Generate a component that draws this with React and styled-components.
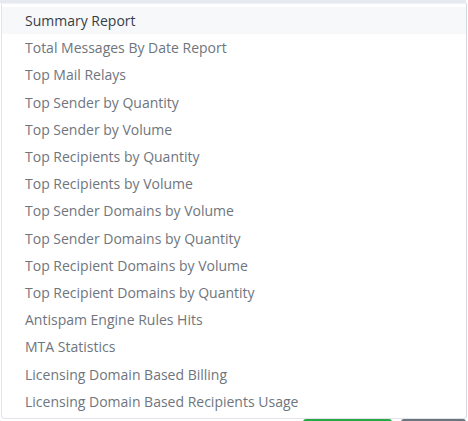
import React from "react";
import styled, { createGlobalStyle } from "styled-components";

const GlobalStyle = createGlobalStyle`
  html, body {
    margin: 0;
    padding: 0;
    background: #ffffff;
    height: 421px;
    overflow: hidden;
  }
  body {
    font-family: "Open Sans", "Liberation Sans", sans-serif;
  }
`;

const reports = [
  "Summary Report",
  "Total Messages By Date Report",
  "Top Mail Relays",
  "Top Sender by Quantity",
  "Top Sender by Volume",
  "Top Recipients by Quantity",
  "Top Recipients by Volume",
  "Top Sender Domains by Volume",
  "Top Sender Domains by Quantity",
  "Top Recipient Domains by Volume",
  "Top Recipient Domains by Quantity",
  "Antispam Engine Rules Hits",
  "MTA Statistics",
  "Licensing Domain Based Billing",
  "Licensing Domain Based Recipients Usage",
];

export default function App() {
  return (
    <>
      <GlobalStyle />
      <Page>
        <SelectEdge />
        <Menu>
          {reports.map((name, i) => (
            <Option key={name} active={i === 0}>
              {name}
            </Option>
          ))}
        </Menu>
        {/* form buttons sit under the open menu, only their top edge shows */}
        <Actions>
          <ActionButton aria-label="Generate" tone="#28a745" width="89px" />
          <ActionButton aria-label="Cancel" tone="#6c757d" width="65px" />
        </Actions>
      </Page>
    </>
  );
}

const Page = styled.div`
  width: 468px;
  display: flex;
  flex-direction: column;
`;

const SelectEdge = styled.div`
  height: 3px;
  background: #e6e9ef;
  margin-right: 2px;
`;

const Menu = styled.ul`
  list-style: none;
  margin: 0 1px;
  padding: 3px 0 3px;
  background: #ffffff;
  border: 1px solid #e1e5eb;
  border-top: 1px solid #eef1f5;
  border-right-color: #d3d7dd;
  border-radius: 0 0 4px 4px;
  box-sizing: border-box;
  width: 466px;
`;

const Option = styled.li`
  height: 27.2px;
  display: flex;
  align-items: center;
  padding-left: 23px;
  font-size: 14px;
  color: ${(p) => (p.active ? "#383e46" : "#6f757d")};
  background: ${(p) => (p.active ? "#f7f8fa" : "transparent")};
  white-space: nowrap;
`;

const Actions = styled.div`
  display: flex;
  justify-content: flex-end;
  gap: 9px;
  padding-right: 2px;
`;

const ActionButton = styled.button`
  width: ${(p) => p.width};
  height: 34px;
  border: none;
  border-radius: 3px;
  background: ${(p) => p.tone};
`;
